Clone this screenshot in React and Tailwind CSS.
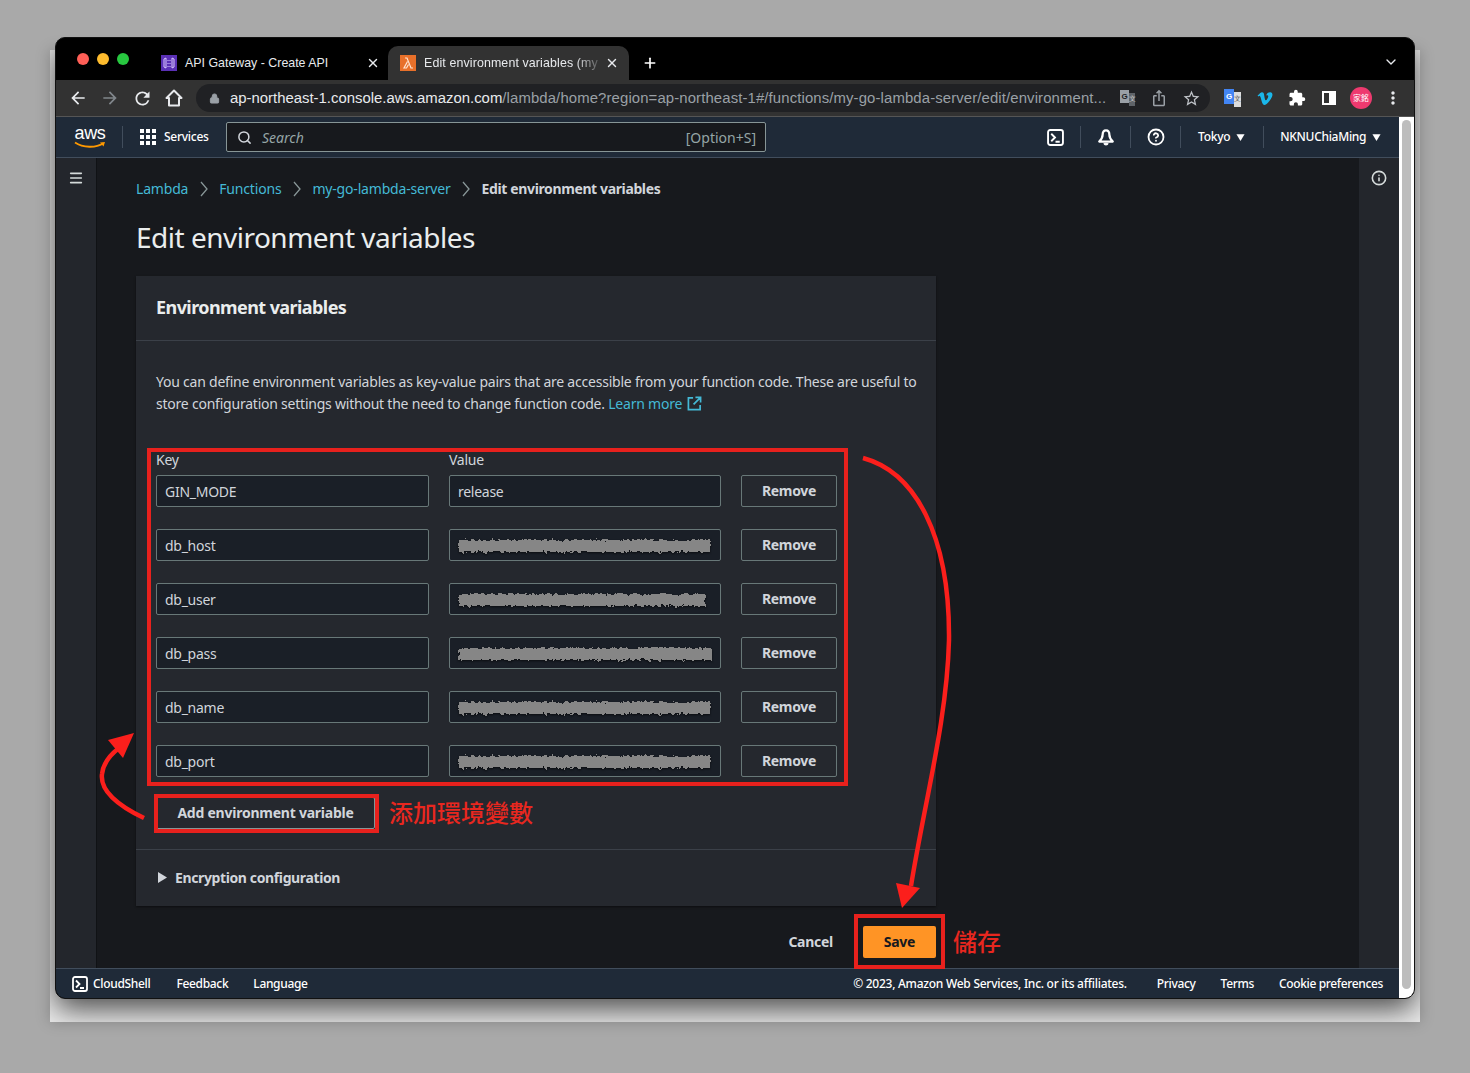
import { Plus, X, Search, CircleHelp, Info, Menu, ChevronDown, Lock } from 'lucide-react';
import { FaVimeoV } from 'react-icons/fa';
import { MdArrowBack, MdArrowForward, MdRefresh, MdExtension, MdMoreVert, MdStarBorder, MdIosShare } from 'react-icons/md';

const rows = [
  { key: 'GIN_MODE', value: 'release' },
  { key: 'db_host', smudge: 253 },
  { key: 'db_user', smudge: 248 },
  { key: 'db_pass', smudge: 257 },
  { key: 'db_name', smudge: 253 },
  { key: 'db_port', smudge: 253 },
];

function Triangle({ className }) {
  return (
    <svg viewBox="0 0 10 10" className={className} fill="currentColor">
      <path d="M0.5 1.5h9L5 9z" />
    </svg>
  );
}

function TerminalIcon({ className }) {
  return (
    <svg viewBox="0 0 16 16" className={className} fill="none" stroke="currentColor" strokeWidth="1.8">
      <rect x="1" y="1" width="14" height="14" rx="2" />
      <path d="M4 4.5L7.5 8 4 11.5M8 12h4" />
    </svg>
  );
}

function BellIcon({ className }) {
  return (
    <svg viewBox="0 0 16 16" className={className} fill="none" stroke="currentColor" strokeWidth="2">
      <path d="M8 2C5.8 2 5 4 5 6c0 2.500-1 4-3 6h12c-2-2-3-3.500-3-6 0-2-.8-4-3-4z" strokeLinejoin="round" />
      <path d="M6.500 13.500a1.600 1.600 0 0 0 3 0" />
    </svg>
  );
}

function Chevron() {
  return (
    <svg viewBox="0 0 8 16" className="mx-[11.5px] h-[16px] w-[8px]" fill="none" stroke="#879596" strokeWidth="1.3">
      <path d="M1 1l6 7-6 7" />
    </svg>
  );
}

// the redacted values in the picture: a rough grey scribble
function Smudge({ width, id }) {
  return (
    <svg width={width} height="20" className="mt-[2px] block drop-shadow-[0_1px_1px_rgba(0,0,0,0.6)]">
      <defs>
        <filter id={id} x="-2%" y="-40%" width="104%" height="180%">
          <feTurbulence type="fractalNoise" baseFrequency="0.3" numOctaves="2" seed={width} />
          <feDisplacementMap in="SourceGraphic" scale="6" xChannelSelector="R" yChannelSelector="G" />
        </filter>
      </defs>
      <rect x="1" y="4" width={width - 2} height="12" fill="#868686" filter={`url(#${id})`} />
    </svg>
  );
}

function NavSep() {
  return <div className="h-[22px] w-px bg-[#414d5c]" />;
}

function Annotations() {
  return (
    <>
      <div className="absolute left-[147px] top-[448px] h-[338px] w-[701px] border-4 border-[#e8211d]" />
      <div className="absolute left-[154px] top-[794px] h-[39px] w-[225px] border-4 border-[#e8211d]" />
      <div className="absolute left-[854px] top-[914px] h-[55px] w-[91px] border-4 border-[#e8211d]" />
      <span className="absolute left-[389px] top-[795px] text-[24px] font-medium leading-[34px] tracking-normal text-[#e8271f] font-['Noto_Sans_CJK_TC',sans-serif]">
        添加環境變數
      </span>
      <span className="absolute left-[953px] top-[924px] text-[24px] font-medium leading-[34px] tracking-normal text-[#e8271f] font-['Noto_Sans_CJK_TC',sans-serif]">
        儲存
      </span>
      <svg className="pointer-events-none absolute left-0 top-0" width="1470" height="1073" fill="none">
        <path d="M863 458C915 472 950 535 949 640C947 720 925 800 911 886" stroke="#fb1f1c" strokeWidth="4.5" />
        <path d="M902 908L896 883L920 888Z" fill="#fb1f1c" />
        <path d="M144 818C115 804 100 790 102 774C103 764 110 755 119 748" stroke="#fb1f1c" strokeWidth="4.5" />
        <path d="M134 733L108 740L123 758Z" fill="#fb1f1c" />
      </svg>
    </>
  );
}

export default function App() {
  return (
    <div className="relative h-[1073px] w-[1470px] overflow-hidden bg-[#a9a9a9] pl-[55px] pt-[37px] tracking-[-0.017em] font-['Noto_Sans','Noto_Sans_CJK_TC',sans-serif]">
      {/* light sheet behind the window, the window's shadow is clipped to it */}
      <div className="absolute left-[50px] top-[50px] h-[972px] w-[1370px] overflow-hidden bg-[#ececec] shadow-[0_0_14px_rgba(0,0,0,0.22)]">
        <div className="ml-[5px] mt-[-13px] h-[962px] w-[1360px] rounded-[10px] shadow-[0_10px_30px_rgba(0,0,0,0.7)]" />
      </div>

      <div className="relative flex h-[962px] w-[1360px] flex-col overflow-hidden rounded-[10px] border border-[#111] bg-black">
        {/* tab strip */}
        <div className="flex h-[42px] shrink-0 items-end tracking-normal text-[12.4px] text-[#e8eaed] font-['Liberation_Sans',sans-serif]">
          <div className="mb-[15px] ml-[21px] flex w-[52px] gap-[8px]">
            <span className="h-3 w-3 rounded-full bg-[#ff5f57]" />
            <span className="h-3 w-3 rounded-full bg-[#febc2e]" />
            <span className="h-3 w-3 rounded-full bg-[#28c840]" />
          </div>
          <div className="ml-[32px] flex h-[34px] w-[219px] items-center">
            <span className="flex h-4 w-4 items-center justify-center bg-[#5a30b5]">
              <svg viewBox="0 0 16 16" className="h-4 w-4" fill="none" stroke="#d9c8ff" strokeWidth="1">
                <path d="M5 3L3 4v8l2 1zM11 3l2 1v8l-2 1zM7 5v1M7 8v1M7 11v1M9 5v1M9 8v1M9 11v1" />
              </svg>
            </span>
            <span className="ml-2 flex-1">API Gateway - Create API</span>
            <X className="h-[14px] w-[14px]" strokeWidth={2.5} />
          </div>
          <div className="ml-[8px] flex h-[34px] w-[241px] items-center rounded-t-[10px] bg-[#323232] pl-[12px] pr-[10px]">
            <svg viewBox="0 0 16 16" className="h-4 w-4 shrink-0 bg-[#e8702a]" fill="none" stroke="#ffe3d0" strokeWidth="1.2">
              <path d="M5 3h2l4 10h2M7.500 6.500L4 13h2.500l2-3.500" />
            </svg>
            <span className="ml-2 flex-1 whitespace-nowrap tracking-[0.01em] [mask-image:linear-gradient(to_left,transparent,black_30px)]">
              Edit environment variables (my
            </span>
            <X className="h-[14px] w-[14px] shrink-0" strokeWidth={2.5} />
          </div>
          <Plus className="mb-[9px] ml-[13px] h-[16px] w-[16px] text-white" strokeWidth={2.5} />
          <ChevronDown className="mb-[10px] ml-auto mr-[15px] h-[16px] w-[16px]" />
        </div>

        {/* toolbar */}
        <div className="flex h-[37px] shrink-0 items-center border-b border-[#555] bg-[#323232] tracking-normal text-[#e8eaed] font-['Liberation_Sans',sans-serif]">
          <MdArrowBack className="ml-[12px] h-[20px] w-[20px]" />
          <MdArrowForward className="ml-[12px] h-[20px] w-[20px] text-[#80868b]" />
          <MdRefresh className="ml-[12px] h-[21px] w-[21px]" />
          <svg viewBox="0 0 18 18" className="ml-[12px] h-[18px] w-[18px]" fill="none" stroke="currentColor" strokeWidth="2">
            <path d="M9 1.500L1.500 9H4v7.500h10V9h2.500z" strokeLinejoin="round" />
          </svg>
          <div className="ml-[13px] flex h-[28px] w-[1014px] items-center rounded-full bg-[#202124] pl-[13px]">
            <Lock className="h-[11px] w-[11px] shrink-0 text-[#9aa0a6]" fill="#9aa0a6" />
            <span className="ml-[10px] w-[878px] truncate text-[14.9px] tracking-[0.008em] text-[#9aa0a6]">
              <span className="tracking-normal text-[#e8eaed]">ap-northeast-1.console.aws.amazon.com</span>
              /lambda/home?region=ap-northeast-1#/functions/my-go-lambda-server/edit/environment...
            </span>
            <span className="ml-[12px] flex h-[16px] w-[15px] shrink-0">
              <span className="flex h-[13px] w-[9px] items-center justify-center bg-[#9aa0a6] text-[8px] font-bold text-[#202124]">G</span>
              <span className="mt-[3px] flex h-[13px] w-[6px] items-center justify-center bg-[#5f6368] text-[7px] text-[#ccc]">文</span>
            </span>
            <MdIosShare className="ml-[15px] h-[18px] w-[18px] text-[#9aa0a6]" />
            <MdStarBorder className="ml-[14px] h-[19px] w-[19px] text-[#bdc1c6]" />
          </div>
          <span className="ml-[14px] flex h-[18px] w-[17px] shrink-0">
            <span className="flex h-[15px] w-[10px] items-center justify-center bg-[#4285f4] text-[8px] font-bold text-white">G</span>
            <span className="mt-[3px] flex h-[15px] w-[7px] items-center justify-center bg-[#dcdcdc] text-[7px] text-[#555]">文</span>
          </span>
          <FaVimeoV className="ml-[15px] h-[17px] w-[18px] text-[#1ab7ea]" />
          <MdExtension className="ml-[14px] h-[18px] w-[18px] text-white" />
          <span className="ml-[16px] h-[14px] w-[14px] border-[2px] border-r-[7px] border-white" />
          <span className="ml-[14px] flex h-[22px] w-[22px] items-center justify-center rounded-full bg-[#ee3a6f] text-[8px] text-white font-['Noto_Sans_CJK_TC',sans-serif]">家銘</span>
          <MdMoreVert className="ml-[11px] h-[20px] w-[20px]" />
        </div>

        {/* console area with the browser scrollbar on the right */}
        <div className="flex min-h-0 flex-1">
          <div className="flex min-w-0 flex-1 flex-col text-[#d1d5db]">
            {/* aws nav */}
            <div className="flex h-[41px] shrink-0 items-center border-b border-[#414d5c] bg-[#1f2a38] text-[12px] font-medium text-white">
              <div className="ml-[17px] flex w-[34px] flex-col items-center">
                <span className="text-[18px] font-normal leading-[15px] font-['Liberation_Sans',sans-serif]">aws</span>
                <svg viewBox="0 0 32 8" className="h-[8px] w-[32px]" fill="none">
                  <path d="M1 1.500C9 7 22 7 29 2.500" stroke="#ff9900" strokeWidth="1.8" />
                  <path d="M26 1.500l5-.5-1.500 4.500z" fill="#ff9900" />
                </svg>
              </div>
              <div className="ml-[15px]">
                <NavSep />
              </div>
              <svg viewBox="0 0 16 16" className="ml-[17px] h-4 w-4" fill="white">
                <path d="M0 0h4v4H0zM6 0h4v4H6zM12 0h4v4h-4zM0 6h4v4H0zM6 6h4v4H6zM12 6h4v4h-4zM0 12h4v4H0zM6 12h4v4H6zM12 12h4v4h-4z" />
              </svg>
              <span className="ml-2 w-[62px]">Services</span>
              <div className="flex h-[30px] w-[540px] items-center rounded-[2px] border border-[#879596] bg-[#17191d] pl-[10px] pr-[9px] text-[14px] font-normal tracking-normal text-[#95a5a6]">
                <Search className="h-[15px] w-[15px] text-[#d1d5db]" strokeWidth={2.4} />
                <span className="ml-[10px] flex-1 italic">Search</span>
                <span>[Option+S]</span>
              </div>
              <TerminalIcon className="ml-[281px] h-[17px] w-[17px]" />
              <div className="ml-[16px]">
                <NavSep />
              </div>
              <BellIcon className="ml-[16px] h-[18px] w-[18px]" />
              <div className="ml-[15px]">
                <NavSep />
              </div>
              <CircleHelp className="ml-[16px] h-[18px] w-[18px]" strokeWidth={2.4} />
              <div className="ml-[15px]">
                <NavSep />
              </div>
              <span className="ml-[17px]">Tokyo</span>
              <Triangle className="ml-[6px] h-[9px] w-[9px]" />
              <div className="ml-[18px]">
                <NavSep />
              </div>
              <span className="ml-[16px] tracking-[-0.025em]">NKNUChiaMing</span>
              <Triangle className="ml-[6px] h-[9px] w-[9px]" />
            </div>

            {/* body */}
            <div className="flex min-h-0 flex-1 bg-[#17191d]">
              <div className="flex w-[41px] shrink-0 justify-center border-r border-[#101215] bg-[#23262c] pt-[12px]">
                <Menu className="h-[16px] w-[16px] text-[#d5dbdb]" strokeWidth={2.4} />
              </div>
              <div className="min-w-0 flex-1 pl-[39px]">
                <div className="flex h-[61px] items-center text-[14px] tracking-[-0.013em] text-[#44b9d6]">
                  <span>Lambda</span>
                  <Chevron />
                  <span>Functions</span>
                  <Chevron />
                  <span>my-go-lambda-server</span>
                  <Chevron />
                  <span className="font-bold tracking-[-0.027em] text-[#d1d5db]">Edit environment variables</span>
                </div>
                <h1 className="h-[57px] text-[28px] leading-[36px] tracking-[-0.018em] text-[#eaeded]">Edit environment variables</h1>

                <div className="w-[800px] bg-[#25282e] shadow-[0_1px_2px_rgba(0,0,0,0.5)]">
                  <div className="flex h-[65px] items-center border-b border-[#3b4048] px-[20px] pb-[2px] text-[18px] font-bold tracking-[-0.032em] text-[#eaeded]">
                    Environment variables
                  </div>
                  <div className="px-[20px] pt-[30px]">
                    <p className="whitespace-nowrap text-[14px] leading-[22px] tracking-[-0.016em]">
                      You can define environment variables as key-value pairs that are accessible from your function code. These are useful to
                      <br />
                      store configuration settings without the need to change function code.{' '}
                      <span className="text-[#44b9d6]">
                        Learn more
                        <svg viewBox="0 0 16 16" className="ml-[5px] inline h-[15px] w-[15px] align-[-2px]" fill="none" stroke="currentColor" strokeWidth="1.8">
                          <path d="M6.500 2H1.500v12.500H14V9.500M9 1.500h5.500V7M14.500 1.500L7 9" />
                        </svg>
                      </span>
                    </p>
                    <div className="mt-[34px] grid grid-cols-[273px_272px_96px] gap-x-[20px]">
                      <div className="h-[26px] text-[14px] leading-[22px]">Key</div>
                      <div className="col-span-2 h-[26px] text-[14px] leading-[22px]">Value</div>
                      {rows.map((row, i) => (
                        <div key={row.key} className={`col-span-3 grid grid-cols-subgrid ${i > 0 ? 'mt-[22px]' : ''}`}>
                          <div className="flex h-[32px] items-center rounded-[2px] border border-[#687878] bg-[#1a1f27] px-[8px] text-[14px]">
                            {row.key}
                          </div>
                          <div className="flex h-[32px] items-center rounded-[2px] border border-[#687878] bg-[#1a1f27] px-[8px] text-[14px]">
                            {row.value || <Smudge width={row.smudge} id={`smudge-${i}`} />}
                          </div>
                          <div className="flex h-[32px] items-center justify-center rounded-[2px] border border-[#687878] pb-[2px] text-[14px] font-bold tracking-[-0.024em]">
                            Remove
                          </div>
                        </div>
                      ))}
                    </div>
                    <div className="mt-[20px] flex h-[32px] w-[219px] items-center justify-center rounded-[2px] border border-[#879596] pb-[2px] text-[14px] font-bold tracking-[-0.017em]">
                      Add environment variable
                    </div>
                  </div>
                  <div className="mt-[20px] flex h-[57px] items-center border-t border-[#3b4048] pb-[2px] pl-[22px] text-[14px] font-bold tracking-[-0.027em]">
                    <svg viewBox="0 0 10 11" className="h-[11px] w-[10px]" fill="currentColor">
                      <path d="M0 0l9 5.500-9 5.500z" />
                    </svg>
                    <span className="ml-[7px]">Encryption configuration</span>
                  </div>
                </div>

                <div className="mt-[20px] flex w-[800px] items-center justify-end">
                  <span className="pb-[2px] text-[14px] font-bold">Cancel</span>
                  <div className="ml-[30px] flex h-[32px] w-[73px] items-center justify-center rounded-[2px] bg-[#ff9425] pb-[2px] text-[14px] font-bold text-[#16191f]">
                    Save
                  </div>
                </div>
              </div>
              <div className="flex w-[40px] shrink-0 justify-center bg-[#23262c] pt-[12px]">
                <Info className="h-[16px] w-[16px] text-[#d5dbdb]" strokeWidth={2.4} />
              </div>
            </div>

            {/* console footer */}
            <div className="flex h-[30px] shrink-0 items-center border-t border-[#414d5c] bg-[#1f2a38] px-[16px] text-[12px] font-medium tracking-[-0.027em] text-white">
              <TerminalIcon className="h-[16px] w-[16px]" />
              <span className="ml-[5px]">CloudShell</span>
              <span className="ml-[26px]">Feedback</span>
              <span className="ml-[25px]">Language</span>
              <span className="ml-auto tracking-[-0.022em]">© 2023, Amazon Web Services, Inc. or its affiliates.</span>
              <span className="ml-[30px]">Privacy</span>
              <span className="ml-[25px]">Terms</span>
              <span className="ml-[25px] tracking-[-0.03em]">Cookie preferences</span>
            </div>
          </div>
          <div className="w-[15px] shrink-0 bg-white px-[3px] pb-[9px] pt-[3px]">
            <div className="h-full rounded-full bg-[#bdbdbd]" />
          </div>
        </div>
      </div>
      <Annotations />
    </div>
  );
}
